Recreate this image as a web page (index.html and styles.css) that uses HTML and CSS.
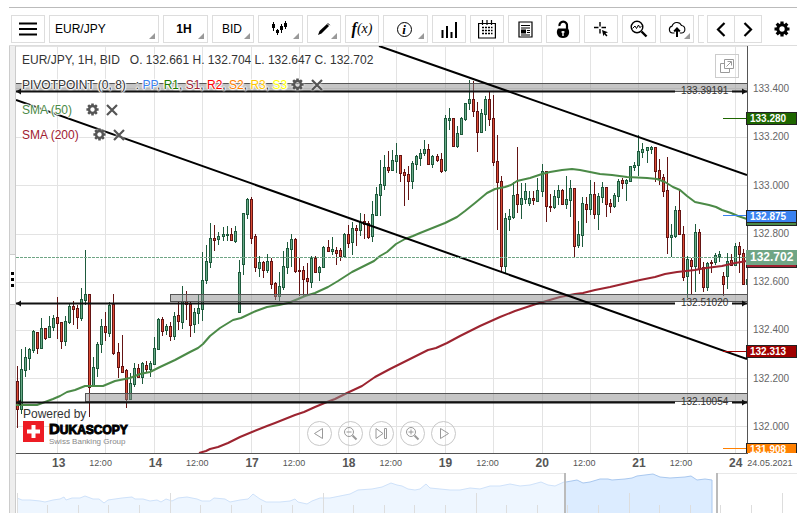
FILE: index.html
```html
<!DOCTYPE html>
<html lang="en">
<head>
<meta charset="utf-8">
<meta name="viewport" content="width=device-width, initial-scale=1">
<title>EUR/JPY chart</title>
<link rel="stylesheet" href="styles.css">
</head>
<body>
<svg class="sprite" aria-hidden="true">
  <symbol id="gear" viewBox="0 0 16 16">
    <circle cx="8" cy="8" r="4.2" fill="none" stroke="currentColor" stroke-width="3"/>
    <path d="M8 .5v3M8 12.500v3M.5 8h3M12.500 8h3M2.700 2.700l2 2M11.300 11.300l2 2M2.700 13.300l2-2M11.300 4.700l2-2" stroke="currentColor" stroke-width="3.200" fill="none"/>
  </symbol>
  <symbol id="close" viewBox="0 0 12 12">
    <path d="M1 1l10 10M11 1L1 11" stroke="currentColor" stroke-width="2.200" fill="none"/>
  </symbol>
</svg>
<main class="app">
  <header class="toolbar">
    <div class="toolbar__tools">
      <button class="tool" aria-label="Menu"><svg width="18" height="14" viewBox="0 0 18 14"><path d="M0 1.500h18M0 7h18M0 12.500h18" stroke="#000" stroke-width="2.200"/></svg></button>
      <button class="tool tool--symbol tool--menu">EUR/JPY</button>
      <button class="tool tool--wide tool--menu"><b>1H</b></button>
      <button class="tool tool--side tool--menu">BID</button>
      <button class="tool tool--wide tool--menu" aria-label="Chart type"><svg width="18" height="16" viewBox="0 0 18 16"><path d="M3.500 1v9M7.500 8v6M11.500 3v9M15.500 0v8" stroke="#000"/><path d="M2 3h3v4H2zM6 9h3v3H6zM10 5h3v4h-3zM14 2h3v4h-3z"/></svg></button>
      <button class="tool tool--menu" aria-label="Draw"><svg width="14" height="14" viewBox="0 0 14 14"><path d="M1 13l1.500-4L10 2l2 2L4.500 11.500z"/><path d="M10.700 1.200l2 2" stroke="#000"/></svg></button>
      <button class="tool tool--fx" aria-label="Indicators"><b>f</b>(x)</button>
      <button class="tool tool--wide tool--menu" aria-label="Info"><span class="info">i</span></button>
      <button class="tool" aria-label="Volume"><svg width="18" height="18" viewBox="0 0 18 18"><path d="M2.500 10v8M7 6v12M11.500 12v6M16 2v16" stroke="#000" stroke-width="2"/></svg></button>
      <button class="tool" aria-label="Calendar"><svg width="18" height="19" viewBox="0 0 18 19"><path d="M.6 3.500h16.800v14.500H.6zM4.500 0v5M9 0v5M13.500 0v5" stroke="#000" stroke-width="1.200" fill="none"/><path d="M4 7.500h10.500M4 10.500h10.500M4 13.500h10.500" stroke="#000" stroke-width="1.500" stroke-dasharray="2 1"/></svg></button>
      <button class="tool" aria-label="News"><svg width="15" height="17" viewBox="0 0 15 17"><path d="M1 1h13v15H1z" stroke="#000" stroke-width="1.200" fill="none"/><path d="M3 4.500h9M3 7h9M9 9.500h3M9 11.500h3M3 14h9" stroke="#000"/><path d="M3 8.500h5v4H3z"/></svg></button>
      <button class="tool" aria-label="Lock"><svg width="16" height="19" viewBox="0 0 16 19"><path d="M4.500 6a3.800 3.800 0 1 1 7.500 0v4" stroke="#000" stroke-width="2.200" fill="none"/><path d="M3 8.500h10a6.500 6.500 0 0 1-1 8.500q-4 2-8 0a6.500 6.500 0 0 1-1-8.500z"/><path d="M8 11v5M6.500 12h3" stroke="#fff" stroke-width="1.400"/></svg></button>
      <button class="tool" aria-label="Crosshair"><svg width="18" height="18" viewBox="0 0 18 18"><path d="M8 2v4.500M8 9v4.500M2 7.500h4.500M9.500 7.500h4.500" stroke="#000" stroke-width="1.400"/><path d="M10 10l6 2.300-2.500 1 2 2.300-1.200 1-1.900-2.400-1 2z"/></svg></button>
      <button class="tool" aria-label="Zoom area"><svg width="18" height="18" viewBox="0 0 18 18" fill="none" stroke="#000"><circle cx="7" cy="7" r="5.800" stroke-width="1.400"/><path d="M11.500 11.500l5 5" stroke-width="2.400"/><path d="M2.500 8.500L5 6l1.500 2.500L8.500 5l1.200 2.500 1.800-1"/></svg></button>
      <button class="tool tool--menu" aria-label="Upload"><svg width="18" height="17" viewBox="0 0 18 17" fill="none" stroke="#000"><path d="M6.500 12H4.500a3.500 3.500 0 0 1-.4-6.900 5 5 0 0 1 9.400-.6 3.800 3.800 0 0 1 .3 7.500h-2" stroke-width="1.100"/><path d="M9 16V8.500M6.200 10.500L9 7.500l2.800 3" stroke-width="2"/></svg></button>
      <button class="tool" aria-label="More"></button>
    </div>
    <div class="pager">
      <button class="tool pager__btn" aria-label="Scroll tools left"><svg width="10" height="15" viewBox="0 0 10 15"><path d="M8.500 1L2 7.500 8.500 14" fill="none" stroke="#000" stroke-width="2.200"/></svg></button>
      <button class="tool pager__btn" aria-label="Scroll tools right"><svg width="10" height="15" viewBox="0 0 10 15"><path d="M1.500 1L8 7.500 1.500 14" fill="none" stroke="#000" stroke-width="2.200"/></svg></button>
    </div>
    <button class="tool settings" aria-label="Settings"><svg width="16" height="16"><use href="#gear"/></svg></button>
  </header>

  <div class="workspace">
    <div class="splitter">
      <div class="splitter__bar"></div>
      <div class="splitter__grip"><i></i><i></i><i></i></div>
      <div class="splitter__bar"></div>
    </div>
    <div class="panel">
      <div class="chart">
        <div class="plot">
          <svg class="plot__canvas" id="plot" viewBox="16 46 731 407" role="img" aria-label="EUR/JPY hourly candles"></svg>
          <div class="legend">
            <div class="legend__row">EUR/JPY, 1H, BID<span class="ohlc">O. 132.661 H. 132.704 L. 132.647 C. 132.702</span></div>
            <div class="legend__row"><span>PIVOTPOINT (0, 8)</span><span class="pivots">: <span class="pp">PP</span>, <span class="r1">R1</span>, <span class="s1">S1</span>, <span class="r2">R2</span>, <span class="s2">S2</span>, <span class="r3">R3</span>, <span class="s3">S3</span></span>
              <button class="mini mini--near" aria-label="Pivot settings"><svg width="13" height="13"><use href="#gear"/></svg></button><button class="mini" aria-label="Remove pivot"><svg width="12" height="12"><use href="#close"/></svg></button></div>
            <div class="legend__row"><span class="sma50">SMA (50)</span>
              <button class="mini mini--far" aria-label="SMA 50 settings"><svg width="13" height="13"><use href="#gear"/></svg></button><button class="mini" aria-label="Remove SMA 50"><svg width="12" height="12"><use href="#close"/></svg></button></div>
            <div class="legend__row"><span class="s1">SMA (200)</span>
              <button class="mini mini--far" aria-label="SMA 200 settings"><svg width="13" height="13"><use href="#gear"/></svg></button><button class="mini" aria-label="Remove SMA 200"><svg width="12" height="12"><use href="#close"/></svg></button></div>
          </div>
          <button class="popout" aria-label="Open in new window"><svg width="16" height="16" viewBox="0 0 16 16" fill="none" stroke="#999"><path d="M5.500 1.500h9v9h-9zM5.500 5.500h-4v9h9v-4M7.500 8.500L12 4M8.500 3.500h4v4"/></svg></button>
          <div class="brand">
            <div>Powered by</div>
            <div class="brand__logo">
              <svg width="21" height="21" viewBox="0 0 21 21"><path d="M0 0h21v21H0z" fill="#ed1c24"/><path d="M8.500 4h4v4.500H17v4h-4.500V17h-4v-4.500H4v-4h4.500z" fill="#fff"/></svg>
              <div class="brand__text"><div class="brand__name">DUKASCOPY</div><div class="brand__sub">Swiss Banking Group</div></div>
            </div>
          </div>
          <div class="controls">
            <button class="round" aria-label="Back"><svg width="15" height="15" viewBox="0 0 15 15"><path d="M10.500 2.500v10L2.500 7.500z"/></svg></button>
            <button class="round" aria-label="Zoom out"><svg width="15" height="15" viewBox="0 0 15 15"><circle cx="6" cy="6" r="4.500"/><path d="M3.500 6h5"/><path d="M9.500 9.500l4 4" stroke-width="2"/></svg></button>
            <button class="round" aria-label="Latest"><svg width="15" height="15" viewBox="0 0 15 15"><path d="M2 2.500v10L9 7.500zM10.500 2.500h2v10h-2z"/></svg></button>
            <button class="round" aria-label="Zoom in"><svg width="15" height="15" viewBox="0 0 15 15"><circle cx="6" cy="6" r="4.500"/><path d="M3.500 6h5M6 3.500v5"/><path d="M9.500 9.500l4 4" stroke-width="2"/></svg></button>
            <button class="round" aria-label="Forward"><svg width="15" height="15" viewBox="0 0 15 15"><path d="M4.500 2.500v10l8-5z"/></svg></button>
          </div>
        </div>
        <div class="prices">
          <ul class="prices__list">
            <li>133.400</li><li>133.200</li><li>133.000</li><li>132.800</li><li>132.600</li><li>132.400</li><li>132.200</li><li>132.000</li>
          </ul>
          <div class="tag tag--r1">133.280</div>
          <div class="tag tag--sma50"></div>
          <div class="tag tag--pp">132.875</div>
          <div class="tag tag--sma200"></div>
          <div class="tag tag--last">132.702</div>
          <div class="tag tag--s1">132.313</div>
          <div class="tag tag--s2">131.908</div>
        </div>
      </div>
      <div class="times">
        <div class="day"><b>13</b><span>12:00</span></div>
        <div class="day"><b>14</b><span>12:00</span></div>
        <div class="day"><b>17</b><span>12:00</span></div>
        <div class="day"><b>18</b><span>12:00</span></div>
        <div class="day"><b>19</b><span>12:00</span></div>
        <div class="day"><b>20</b><span>12:00</span></div>
        <div class="day"><b>21</b><span>12:00</span></div>
        <div class="day day--last"><b>24</b><span>24.05.2021</span></div>
      </div>
      <svg class="navigator" id="navigator" viewBox="16 473 781 40" role="img" aria-label="Range overview"></svg>
    </div>
  </div>
</main>
<script src="chart.js"></script>
</body>
</html>
```
FILE: styles.css
```css
* { box-sizing: border-box; }

body {
  margin: 0;
  background: #fff;
  color: #333;
  font: 12px/14px "Liberation Sans", Arial, sans-serif;
}

button { font: inherit; color: inherit; padding: 0; background: none; border: 0; }
svg { display: block; flex: none; }
.sprite { position: absolute; width: 0; height: 0; }

.app { margin: 7px 4px 10px 9px; border-top: 1px solid #bbb; }

/* Toolbar */
.toolbar { display: flex; padding: 7px 0 2px 2px; border-bottom: 1px solid #ddd; }
.toolbar__tools { display: flex; gap: 4px; flex: 1 1 0; min-width: 0; overflow: hidden; }
.tool {
  position: relative;
  display: flex;
  align-items: center;
  justify-content: center;
  flex: none;
  width: 34px;
  height: 28px;
  border: 1px solid #ddd;
  color: #000;
}
.tool--wide { width: 45px; padding-right: 3px; }
.tool--side { width: 42px; padding-right: 2px; }
.tool--symbol { width: 110px; justify-content: flex-start; padding-left: 5px; }
.tool--menu::after {
  content: "";
  position: absolute;
  right: 3px;
  bottom: 3px;
  border-style: solid;
  border-width: 0 0 6px 6px;
  border-color: transparent transparent #999;
}
.tool--fx { font: italic 14px/18px "Liberation Serif", serif; }
.tool--fx b { font-size: 16px; }
.info {
  width: 15px;
  height: 15px;
  border: 1px solid #000;
  border-radius: 50%;
  font: italic bold 13px/13px "Liberation Serif", serif;
  text-align: center;
}
.pager { display: flex; margin-left: 3px; }
.pager__btn { width: 28px; }
.pager__btn + .pager__btn { margin-left: -1px; }
.settings { width: 30px; margin-left: 5px; border: 0; }

/* Workspace */
.workspace { display: grid; grid-template-columns: 7px 1fr; }
.splitter { display: flex; flex-direction: column; border: solid #ccc; border-width: 0 1px; }
.splitter__bar { flex: 1; background: #eee; }
.splitter__grip {
  display: flex;
  flex-direction: column;
  align-items: center;
  justify-content: center;
  gap: 3px;
  height: 51px;
  border: solid #ccc;
  border-width: 1px 0;
}
.splitter__grip i { width: 3px; height: 3px; background: #000; }
.panel { min-width: 0; }
.chart { display: grid; grid-template-columns: 1fr 50px; }
.plot { position: relative; min-width: 0; }
.plot__canvas { width: 100%; height: auto; }

/* Plot shapes */
.grid { stroke: #e3e3e3; }
.up { fill: #1e5a3c; }
.up-fill { fill: #68ab88; }
.down { fill: #641414; }
.down-fill { fill: #dc4c34; }
.line { fill: none; stroke-width: 2; stroke-linejoin: round; }
.line--sma50 { stroke: #4b8a47; }
.line--sma200 { stroke: #9c2430; }
.trend { stroke: #000; stroke-width: 2; }
.band { fill: #8c8c8c; fill-opacity: .5; stroke: #555; }
.level { stroke: #111; stroke-width: 2; }
.level-text { font-size: 10px; fill: #333; }
.last { stroke: #6fa585; stroke-dasharray: 3 1; }

/* Legend */
.legend { position: absolute; top: 1px; left: 6px; }
.legend__row {
  display: flex;
  align-items: center;
  height: 25px;
  white-space: nowrap;
  text-shadow: 1px 0 1px #fff, -1px 0 1px #fff, 0 1px 1px #fff, 0 -1px 1px #fff, 0 0 2px #fff, 0 0 2px #fff;
}
.ohlc, .pivots { margin-left: 10px; }
.pp { color: #3a82f0; }
.r1 { color: #1e7a00; }
.s1 { color: #a02030; }
.r2 { color: #f00; }
.s2 { color: #ff8000; }
.r3 { color: #ffc800; }
.s3 { color: #ff0; }
.sma50 { color: #4b8a47; }
.mini { margin-left: 7px; color: #555; filter: drop-shadow(0 0 1px #fff); }
.mini--near { margin-left: 4px; }
.mini--far { margin-left: 14px; }

.popout {
  position: absolute;
  top: 8px;
  right: 8px;
  display: grid;
  place-items: center;
  width: 24px;
  height: 24px;
  border: 1px solid #ccc;
}

.brand { position: absolute; left: 7px; bottom: 7px; }
.brand__logo { display: flex; gap: 5px; }
.brand__name {
  color: #000;
  font-size: 12px;
  font-weight: bold;
  line-height: 15px;
  -webkit-text-stroke: 1px #000;
}
.brand__name::first-letter { font-size: 15px; }
.brand__sub { color: #888; font-size: 8px; line-height: 8px; }

.controls {
  position: absolute;
  left: 0;
  right: 0;
  bottom: 7px;
  display: flex;
  justify-content: center;
  gap: 6px;
}
.round {
  display: grid;
  place-items: center;
  width: 25px;
  height: 25px;
  border: 1px solid #c8c8c8;
  border-radius: 50%;
}
.round svg { fill: none; stroke: #999; }

/* Price axis */
.prices { position: relative; margin-left: -1px; overflow: hidden; }
.prices__list {
  display: flex;
  flex-direction: column;
  height: 100%;
  margin: 0 0 0 1px;
  padding: 19px 0 2px 5px;
  border-left: 1px solid #555;
  list-style: none;
  color: #666;
  font-size: 10px;
}
.prices__list li { flex: 1; display: flex; align-items: center; }
.tag {
  position: absolute;
  left: 0;
  right: 0;
  height: 13px;
  padding-left: 3px;
  border: 1px solid #222;
  color: #fff;
  font-size: 10px;
  font-weight: bold;
  line-height: 12px;
}
.tag--r1 { top: 16.2%; background: #1e6600; }
.tag--sma50 { top: 41%; background: #4b8a47; }
.tag--pp { top: 40.3%; background: #3a82f0; }
.tag--sma200 { top: 51.3%; background: #a02030; }
.tag--last { top: 50.1%; height: 15px; border: 0; padding-left: 4px; background: #6fa585; font-size: 12px; line-height: 15px; }
.tag--s1 { top: 73.5%; background: #a00000; }
.tag--s2 { top: 97.5%; background: #ff8000; }

/* Time axis */
.times {
  display: grid;
  grid-template-columns: repeat(7, 1fr) 68px;
  height: 20px;
  padding-left: 36px;
  background: linear-gradient(#555, #555) 0 0 / calc(100% - 49px) 1px no-repeat;
}
.day { display: flex; align-items: center; gap: 24px; color: #555; font-size: 9px; white-space: nowrap; }
.day b { font-size: 12px; }
.day--last { gap: 5px; }

/* Range overview */
.navigator { width: 100%; height: auto; }
.nav-edge { stroke: #e8e8e8; }
.nav-tick { stroke: #ddd; }
.nav-area { fill: #eef6ff; }
.nav-line { fill: none; stroke: #cfe2fa; }
.nav-area--on { fill: #dcecff; }
.nav-line--on { fill: none; stroke: #a9c8ef; }
.nav-handle { fill: #bbb; }
```
FILE: chart.js
```js
// Candle columns: x, high, low, body top, body bottom, direction.
const candles = `
17 366 428 381 409 r;21 349 414 369 409 g;25 347 377 357 370 g;29 348 370 349 358 g;33 330 353 331 350 g
37 332 354 332 348 r;41 318 349 328 348 g;45 328 340 328 338 r;49 316 338 326 337 g;53 315 331 318 327 g
57 297 339 317 323 r;61 322 349 322 341 r;65 316 346 321 341 g;69 304 324 306 322 g;73 301 325 306 309 r
77 305 329 308 317 r;81 288 321 299 318 g;85 250 305 294 300 g;89 294 417 294 387 r;93 357 387 367 386 g
97 342 377 344 368 g;101 319 353 326 344 g;105 312 341 326 332 r;109 302 337 305 333 g;113 294 355 304 353 r
118 343 378 352 367 r;122 335 373 366 372 r;126 369 408 370 399 r;130 373 400 383 399 g;134 363 387 368 384 g
138 364 378 368 377 r;142 362 384 363 377 g;146 361 372 365 369 r;150 361 377 363 369 g;154 337 365 348 364 g
158 318 350 319 349 g;162 317 336 319 331 r;166 324 335 326 330 g;170 322 341 326 336 r;174 312 340 316 336 g
178 302 330 315 321 r;182 286 329 301 322 g;186 291 320 301 304 r;190 302 337 304 325 r;194 308 333 312 324 g
198 295 324 308 313 g;202 252 321 280 309 g;206 245 284 261 280 g;210 223 268 238 262 g;214 225 251 238 240 r
218 232 245 236 239 g;223 227 241 234 236 g;227 226 241 234 235 g;231 228 241 234 240 r;235 226 243 231 241 g
239 260 313 272 312 g;243 213 275 213 264 g;247 198 219 199 214 g;251 197 244 199 238 r;255 234 272 236 267 r
259 256 277 262 268 g;263 261 278 262 270 r;267 254 273 261 270 g;271 258 289 261 284 r;275 282 300 283 296 r
279 272 301 286 296 g;283 251 290 266 287 g;287 242 274 248 267 g;291 234 267 239 249 g;295 238 273 239 271 r
299 258 296 270 271 r;303 266 297 270 279 r;307 263 295 278 281 r;311 256 288 258 282 g;315 256 273 258 272 r
319 266 281 267 272 g;323 246 267 247 267 g;328 240 252 247 251 r;332 237 255 249 251 g;336 247 265 250 253 r
340 248 261 250 256 r;344 233 257 234 256 g;348 225 248 234 243 r;352 222 255 228 242 g;356 225 246 228 230 r
360 213 236 222 230 g;364 214 239 221 224 r;368 221 239 223 237 r;372 201 242 214 236 g;376 187 216 194 215 g
380 160 216 184 195 g;384 155 190 167 185 g;388 151 173 167 170 r;392 150 171 160 170 g;396 143 173 155 161 g
400 155 182 155 173 r;404 169 206 172 175 r;408 166 200 174 181 r;412 161 189 163 181 g;416 155 170 156 164 g
420 149 166 153 158 g;424 140 156 149 153 g;428 144 165 149 164 r;432 155 168 156 164 g;437 154 162 156 160 r
441 153 173 159 171 r;445 115 172 118 170 g;449 108 130 118 120 g;453 118 147 118 146 r;457 126 148 133 146 g
461 117 135 118 134 g;465 103 121 103 119 g;469 80 110 99 103 g;473 81 117 99 111 r;477 102 152 111 132 r
481 109 132 113 132 g;485 96 131 99 114 g;489 92 126 99 119 r;493 95 166 118 162 r;497 135 230 161 182 r
501 176 272 181 266 r;505 213 273 218 266 g;509 209 231 216 219 g;513 182 219 195 217 g;517 147 213 194 204 r
521 183 219 198 204 g;525 183 204 191 199 g;529 191 206 198 203 g;533 191 205 198 200 r;537 178 201 190 201 g
542 164 197 171 191 g;546 171 222 171 206 r;550 194 212 206 207 r;554 190 209 196 207 g;558 185 205 190 197 g
562 189 205 190 204 r;566 176 209 199 204 g;570 180 217 188 200 g;574 188 257 188 246 r;578 221 248 234 245 g
582 197 247 203 235 g;586 197 223 204 209 r;590 180 215 194 209 g;594 182 219 194 214 r;598 193 230 196 214 g
602 182 203 187 197 g;606 187 217 187 204 r;610 199 213 203 206 r;614 193 208 195 206 g;618 179 202 181 196 g
622 178 189 180 183 r;626 179 201 180 183 g;630 166 182 166 181 g;634 162 171 165 167 g;638 135 176 151 165 g
642 143 158 149 152 g;647 147 163 147 150 g;651 146 154 147 149 g;655 147 182 147 171 r;659 159 185 170 178 r
663 174 197 177 191 r;667 157 254 190 237 r;671 224 257 235 237 g;675 206 238 210 236 g;679 189 235 210 234 r
683 226 281 234 277 r;687 256 298 259 276 g;691 258 294 260 266 r;695 224 292 232 266 g;699 229 274 232 269 r
703 262 292 267 287 r;707 262 291 263 287 g;711 260 273 262 263 r;715 253 265 255 262 g;719 251 262 254 256 g
723 272 296 276 284 r;727 253 289 261 276 g;731 254 266 260 265 r;735 243 265 246 265 g;739 242 273 246 254 r
743 249 284 253 284 r;747 278 285 279 284 g`.trim().split(/[;\n]/).map(row => row.split(" "));

const sma50 = "16,405 22,405 37,405 45,402 53,399 60,396 67,392 75,390 85,386 103,386 115,381 130,378 140,374 150,372 160,367 175,360 190,352 198,348 203,344 210,336 220,328 233,320 241,318 256,311 267,307 279,305 288,303 298,299 305,296 315,293 328,287 338,281 352,272 362,267 374,261 380,256 387,252 396,244 405,239 413,236 420,233 430,229 445,223 457,217 465,211 475,203 487,193 495,189 505,187 511,185 517,181 530,178 542,174 550,172 562,170 572,169 580,170 590,172 600,174 612,175 627,177 647,178 657,179 665,182 673,187 680,190 687,196 695,202 709,205 716,207 722,210 731,213 738,216 747,219";
const sma200 = "199,453 206,451 210,449 218,447 228,443 240,437 252,432 267,426 275,423 285,419 295,415 304,412 315,407 327,402 335,399 347,393 362,386 375,377 390,369 400,364 410,359 428,350 436,348 447,343 460,336 480,326 500,317 515,311 530,306 536,304 560,297 575,294 583,293 595,290 610,287 627,283 640,280 655,277 665,274 677,272 695,270 706,268 722,266 735,263 747,261";

const vertical = [57, 105, 154, 202, 251, 299, 348, 396, 445, 493, 542, 590, 638, 687, 735];
const horizontal = [88, 137, 185, 234, 282, 330, 378, 426];

let out = "";
vertical.forEach(x => { out += `<path class="grid" d="M${x + 0.5} 46V453"/>`; });
horizontal.forEach(y => { out += `<path class="grid" d="M16 ${y + 0.5}H747"/>`; });
out += `<path class="grid" d="M16 46.500H747"/>`;

candles.forEach(([x, high, low, top, bottom, dir]) => {
  const name = dir === "g" ? "up" : "down";
  const height = bottom - top + 1;
  out += `<rect class="${name}" x="${x}" y="${high}" width="1" height="${low - high}"/>`;
  out += `<rect class="${name}" x="${x - 1}" y="${top}" width="3" height="${height}"/>`;
  if (height > 2) {
    out += `<rect class="${name}-fill" x="${x}" y="${+top + 1}" width="1" height="${height - 2}"/>`;
  }
});

out += `<polyline class="line line--sma50" points="${sma50}"/>`;
out += `<polyline class="line line--sma200" points="${sma200}"/>`;

// Price zones with their level line, arrows and label.
[[15, 83, 91, 91, "133.39191"], [170, 294, 301, 303, "132.51020"], [85, 393, 401, 402, "132.10054"]]
  .forEach(([x, top, bottom, y, label]) => {
    out += `<rect class="band" x="${x + 0.5}" y="${top + 0.5}" width="${750 - x}" height="${bottom - top}"/>`;
    out += `<path class="level" d="M16 ${y + 0.5}H675M732 ${y + 0.5}H747"/>`;
    out += `<path d="M16 ${y + 0.5}l5-3v6zM747 ${y + 0.5}l-5-3v6z" fill="#111"/>`;
    out += `<text class="level-text" x="681" y="${y + 3}">${label}</text>`;
  });

out += `<path class="trend" d="M379 46L747 175M16 100L747 359"/>`;
out += `<path class="last" d="M16 257.500H747"/>`;
[[118, "#1e6600"], [215, "#3a82f0"], [351, "#a00000"], [448, "#ff8000"]].forEach(([y, color]) => {
  out += `<path d="M723 ${y + 0.5}H747" stroke="${color}"/>`;
});
document.getElementById("plot").innerHTML = out;

// Range overview strip.
const before = "17,498 22,500 30,500 40,501 45,502 53,500 60,499 64,497 66,500 72,498 80,498 85,496 93,499 99,499 104,503 108,500 115,499 122,498 132,497 135,499 143,499 150,501 157,500 161,502 166,499 172,501 178,498 187,497 197,499 202,501 210,501 214,498 225,499 230,502 240,500 248,499 253,494 260,499 266,502 280,502 290,501 295,499 298,502 307,504 312,501 320,498 330,498 335,497 350,494 358,490 372,489 382,487 391,483 397,485 402,486 408,489 415,490 420,489 426,484 430,488 440,489 450,490 460,490 470,488 480,489 490,486 500,486 510,484 520,486 530,485 541,482 548,485 555,486 564,482";
const selected = "566,482 577,480 583,483 590,482 600,479 608,479 612,480 625,479 632,478 637,476 645,475 653,474 660,477 670,478 685,477 691,476 697,480 705,479 712,480";
let nav = `<path class="nav-edge" d="M16 473.500H564M717 473.500H797"/>`;
nav += `<polygon class="nav-area" points="17,513 ${before} 564,513"/><polyline class="nav-line" points="${before}"/>`;
nav += `<polygon class="nav-area--on" points="566,513 ${selected} 712,513"/><polyline class="nav-line--on" points="${selected} 712,513"/>`;
for (let i = 0; i < 26; i++) {
  const x = Math.floor(17 + i * 30.6) + 0.5;
  nav += `<path class="nav-tick" d="M${x} ${i % 5 ? 505 : 493}V513"/>`;
}
nav += `<rect class="nav-handle" x="564" y="473" width="2" height="40"/><rect class="nav-handle" x="716" y="473" width="2" height="40"/>`;
document.getElementById("navigator").innerHTML = nav;
```
